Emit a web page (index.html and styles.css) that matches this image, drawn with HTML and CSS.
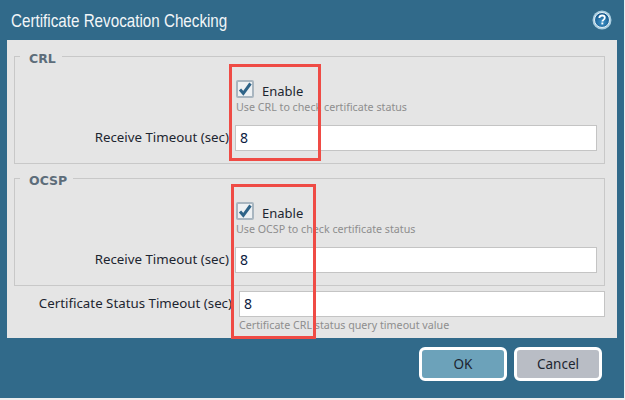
FILE: index.html
```html
<!DOCTYPE html>
<html>

<head>
    <title>Certificate Revocation Checking</title>
    <link rel="stylesheet" href="styles.css">
</head>

<body>
    <div class="dialog">
        <div class="title-bar">
            <span class="title">Certificate Revocation Checking</span>
            <svg class="help-icon" width="20" height="20" viewBox="0 0 20 20">
                <defs>
                    <radialGradient id="helpFill" cx="50%" cy="65%" r="60%">
                        <stop offset="0%" stop-color="#3f93c8"/>
                        <stop offset="100%" stop-color="#14568a"/>
                    </radialGradient>
                </defs>
                <circle cx="10" cy="10" r="9.500" fill="#a9cde0"/>
                <circle cx="10" cy="10" r="7.500" fill="url(#helpFill)" stroke="#e4f0f6" stroke-width="1"/>
                <path d="M7.300 8c.2-1.700 1.300-2.500 2.800-2.500 1.600 0 2.700.9 2.700 2.200 0 1.100-.6 1.600-1.400 2.200-.7.500-1 .8-1 1.600" fill="none" stroke="#fff" stroke-width="1.800"/>
                <rect x="9.400" y="12.500" width="1.900" height="1.900" fill="#fff"/>
            </svg>
        </div>

        <div class="panel">
            <fieldset class="group group-crl">
                <legend>CRL</legend>
                <div class="check-row">
                    <span class="checkbox">
                        <svg width="14" height="14" viewBox="0 0 14 14">
                            <path d="M2 7.500l3.300 3.800L12.500 1.500" fill="none" stroke="#2f6488" stroke-width="3"/>
                        </svg>
                    </span>
                    <span class="check-label">Enable</span>
                </div>
                <div class="help-text">Use CRL to check certificate status</div>
                <div class="row">
                    <label>Receive Timeout (sec)</label>
                    <div class="input">8</div>
                </div>
            </fieldset>

            <fieldset class="group group-ocsp">
                <legend>OCSP</legend>
                <div class="check-row">
                    <span class="checkbox">
                        <svg width="14" height="14" viewBox="0 0 14 14">
                            <path d="M2 7.500l3.300 3.800L12.500 1.500" fill="none" stroke="#2f6488" stroke-width="3"/>
                        </svg>
                    </span>
                    <span class="check-label">Enable</span>
                </div>
                <div class="help-text">Use OCSP to check certificate status</div>
                <div class="row">
                    <label>Receive Timeout (sec)</label>
                    <div class="input">8</div>
                </div>
            </fieldset>

            <div class="row row-outer">
                <label>Certificate Status Timeout (sec)</label>
                <div class="input">8</div>
            </div>
            <div class="help-text help-outer">Certificate CRL status query timeout value</div>
        </div>

        <div class="buttons">
            <button class="btn btn-ok">OK</button>
            <button class="btn btn-cancel">Cancel</button>
        </div>
    </div>

    <!-- red annotation boxes drawn over the dialog -->
    <div class="mark mark-crl"></div>
    <div class="mark mark-ocsp"></div>
</body>

</html>
```

FILE: styles.css
```css
* {
    box-sizing: border-box;
    margin: 0;
    padding: 0;
}

body {
    font-family: "Noto Sans", "DejaVu Sans", sans-serif;
    background: #eeeeee;
    width: 625px;
    height: 400px;
    overflow: hidden;
    position: relative;
}

.dialog {
    background: #316a8a;
    width: 624px;
    height: 398px;
    padding: 0 7px;
}

.title-bar {
    height: 40px;
    display: flex;
    align-items: center;
    justify-content: space-between;
    padding: 0 5px 1px 4px;
}

.title {
    font-family: "Liberation Sans", sans-serif;
    font-size: 19px;
    color: #f2f6f8;
    white-space: nowrap;
    width: 215px;
    margin-top: 2px;
    display: inline-block;
    transform: scaleX(0.8);
    transform-origin: left center;
}

.panel {
    background: #e5e5e5;
    width: 610px;
    height: 298px;
    padding: 5px 7px 0;
}

.group {
    border: 1px solid #c8c8c8;
    width: 591px;
    height: 119px;
    padding: 0;
}

.group legend {
    font-family: "DejaVu Sans", sans-serif;
    font-size: 12.500px;
    font-weight: 700;
    color: #5d6d7a;
    margin-left: 5px;
    padding: 6px 6px 0 9px;
    line-height: 16px;
}

.group-ocsp {
    margin-top: 3px;
}

.check-row {
    display: flex;
    align-items: center;
    margin: 13px 0 0 221px;
    height: 18px;
}

.checkbox {
    width: 18px;
    height: 18px;
    border: 2px solid #a9b6c0;
    border-radius: 2px;
    background: #eef1f3;
    display: flex;
    align-items: center;
    justify-content: center;
}

.check-label {
    font-size: 13px;
    color: #1d2530;
    margin-left: 8px;
    padding-top: 3px;
}

.help-text {
    font-size: 10.700px;
    line-height: 14px;
    color: #8e8e8e;
    margin: 2px 0 0 221px;
}

.row {
    display: flex;
    align-items: center;
    margin-top: 11px;
}

.row label {
    width: 214px;
    text-align: right;
    font-size: 13.300px;
    color: #1d2530;
    white-space: nowrap;
    margin-bottom: 2px;
}

.input {
    margin-left: 6px;
    width: 362px;
    height: 26px;
    background: #ffffff;
    border: 1px solid #c4c4c4;
    padding-left: 4px;
    font-size: 14px;
    line-height: 24px;
    color: #0b1a40;
}

.row-outer {
    margin-top: 5px;
}

.row-outer label {
    width: 218px;
}

.row-outer .input {
    margin-left: 7px;
    width: 366px;
}

.help-outer {
    margin: 1px 0 0 225px;
}

.buttons {
    display: flex;
    justify-content: flex-end;
    gap: 7px;
    margin: 9px 15px 0 0;
}

.btn {
    width: 88px;
    height: 34px;
    border: 3px solid #ffffff;
    border-radius: 6px;
    font-family: inherit;
    font-size: 13.500px;
    color: #1d2530;
}

.btn-ok {
    background: #6ca2ba;
}

.btn-cancel {
    background: #b9bdc5;
}

.mark {
    position: absolute;
    border: 3px solid #ef4b45;
}

.mark-crl {
    left: 229px;
    top: 64px;
    width: 92px;
    height: 97px;
}

.mark-ocsp {
    left: 231px;
    top: 184px;
    width: 85px;
    height: 155px;
}
```
